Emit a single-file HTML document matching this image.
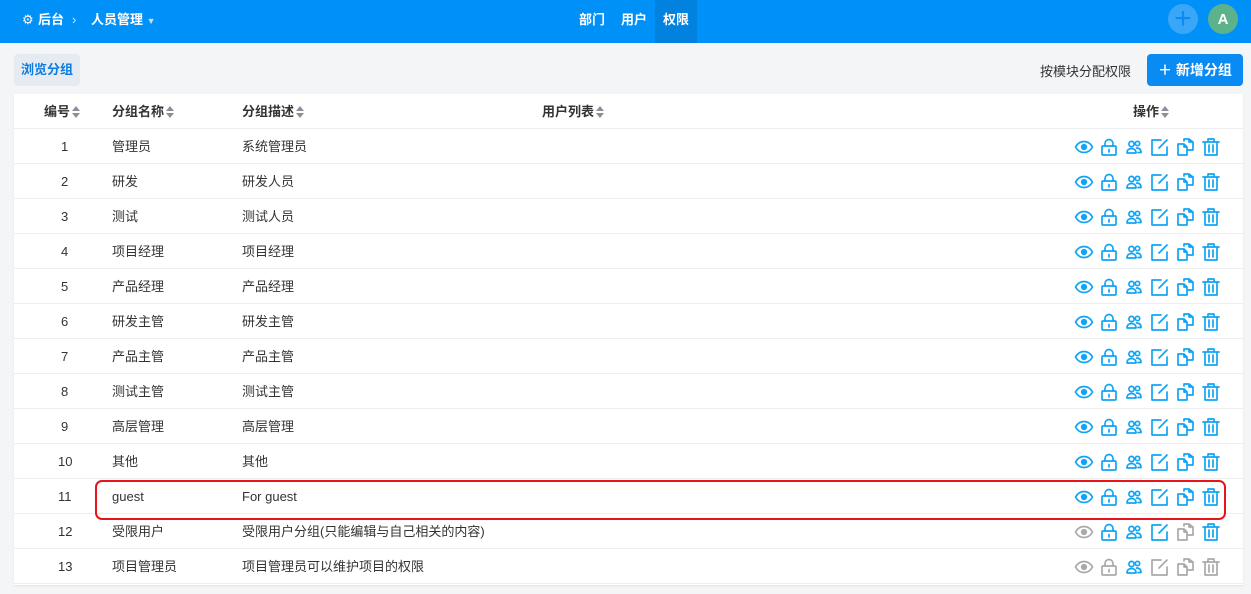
<!DOCTYPE html>
<html><head><meta charset="utf-8"><style>
*{box-sizing:border-box;margin:0;padding:0}
body{width:1251px;height:594px;background:#f4f5f7;font-family:"Liberation Sans","Noto Sans CJK SC",sans-serif;font-size:13px;color:#333;position:relative;overflow:hidden}
.hd{position:absolute;left:0;top:0;width:1251px;height:43px;background:#0091f8;color:#fff}
.hd span{position:absolute;top:11px;font-weight:bold;font-size:13px;line-height:17px}
.tab{position:absolute;top:0;height:43px;line-height:40px;font-weight:bold;color:#fff}
.btn1{position:absolute;left:14px;top:54px;width:66px;height:32px;background:#e6ebf2;border-radius:4px;color:#0a7be0;font-weight:bold;line-height:32px;text-align:center}
.btn2{position:absolute;left:1147px;top:54px;width:96px;height:32px;background:#0a8af3;border-radius:4px;color:#fff;font-weight:bold;line-height:32px;text-align:center;font-size:14px}
.tbl{position:absolute;left:14px;top:94px;width:1229px;height:491px;background:#fff;box-shadow:0 1px 2px rgba(0,0,0,.08)}
.row{position:absolute;left:0;width:1229px;height:35px;border-bottom:1px solid #eceef0;line-height:36px}
.row div{position:absolute;top:0}
.th{font-weight:bold;color:#333}
.s{display:inline-block;vertical-align:middle;margin-left:2px;width:8px;height:12px;position:relative;top:-1px}
.s:before{content:"";position:absolute;left:0;top:0;border:4px solid transparent;border-top:0;border-bottom:5px solid #8a8f99}
.s:after{content:"";position:absolute;left:0;top:7px;border:4px solid transparent;border-bottom:0;border-top:5px solid #8a8f99}
svg.i{position:absolute;top:8px;width:20px;height:20px;fill:none;stroke-width:1.7;stroke-linecap:round;stroke-linejoin:round}
.b{stroke:#10a4f5}.g{stroke:#a9a9a9}
.red{position:absolute;left:95px;top:480px;width:1131px;height:40px;border:2px solid #e8141b;border-radius:7px}
</style></head><body>
<svg width="0" height="0" style="position:absolute">
<symbol id="eye" viewBox="0 0 20 20"><path d="M1.5 10C4 5.5 7 4.5 10 4.5S16 5.5 18.5 10C16 14.5 13 15.5 10 15.5S4 14.5 1.5 10Z"/><circle cx="10" cy="10" r="2.3" fill="currentColor"/></symbol>
<symbol id="lock" viewBox="0 0 20 20"><rect x="3" y="9" width="14" height="9" rx="1"/><path d="M6 9V6.5a4 4 0 0 1 8 0V9M10 12.5v2.5"/></symbol>
<symbol id="usr" viewBox="0 0 20 20"><circle cx="7.5" cy="7" r="2.6"/><path d="M3 16c0-3 2-4.5 4.5-4.5S12 13 12 16Z"/><circle cx="13.5" cy="6.5" r="2.2"/><path d="M12.5 11c3 0 4.5 1.5 4.5 4.5h-3"/></symbol>
<symbol id="edit" viewBox="0 0 20 20"><path d="M17 10v8H2V3h9M17 3l-8 8"/></symbol>
<symbol id="copy" viewBox="0 0 20 20"><path d="M2 7h6l3 3v8H2ZM8 7v3h3M8 4V2h5l4 3v8h-6M13 2v3h4"/></symbol>
<symbol id="trash" viewBox="0 0 20 20"><path d="M2 5h16M7 5V2h6v3M4 5v13h12V5M8 8v7M12 8v7"/></symbol>
</svg>
<div class="hd">
<span style="left:22px;font-weight:normal">⚙</span><span style="left:38px">后台</span>
<span style="left:72px;font-weight:normal;color:#cfe6ff">›</span>
<span style="left:91px">人员管理 <small style="font-size:9px;color:#cde">▼</small></span>
<div class="tab" style="left:579px">部门</div>
<div class="tab" style="left:621px">用户</div>
<div class="tab" style="left:655px;width:42px;background:#0082de;text-align:center">权限</div>
<div style="position:absolute;left:1168px;top:4px;width:30px;height:30px;border-radius:50%;background:#3aa6f7;color:#0a8af3;font-size:30px;line-height:29px;text-align:center">+</div>
<div style="position:absolute;left:1208px;top:4px;width:30px;height:30px;border-radius:50%;background:#5cb38b;color:#fff;font-weight:bold;font-size:15px;line-height:31px;text-align:center">A</div>
</div>
<div class="btn1">浏览分组</div>
<div style="position:absolute;left:1040px;top:61px;color:#333">按模块分配权限</div>
<div class="btn2">＋ 新增分组</div>
<div class="tbl">
<div class="row th" style="top:0"><div style="left:30px">编号<i class="s"></i></div><div style="left:98px">分组名称<i class="s"></i></div><div style="left:228px">分组描述<i class="s"></i></div><div style="left:528px">用户列表<i class="s"></i></div><div style="left:1119px">操作<i class="s"></i></div></div>
<div id="rows"></div>
</div>
<div class="red"></div>
<script>
var d=[["管理员","系统管理员"],["研发","研发人员"],["测试","测试人员"],["项目经理","项目经理"],["产品经理","产品经理"],["研发主管","研发主管"],["产品主管","产品主管"],["测试主管","测试主管"],["高层管理","高层管理"],["其他","其他"],["guest","For guest"],["受限用户","受限用户分组(只能编辑与自己相关的内容)"],["项目管理员","项目管理员可以维护项目的权限"]];
var ic=["eye","lock","usr","edit","copy","trash"],xs=[1060,1085,1110,1136,1162,1187];
var h="";
d.forEach(function(r,i){var c="bbbbbb";if(i==11)c="gbbbgb";if(i==12)c="ggbggg";
h+='<div class="row" style="top:'+(35+i*35)+'px"><div style="left:'+(i>8?44:47)+'px">'+(i+1)+'</div><div style="left:98px">'+r[0]+'</div><div style="left:228px">'+r[1]+'</div>';
ic.forEach(function(n,k){var col=c[k]=="b"?"#10a4f5":"#a9a9a9";h+='<svg class="i '+c[k]+'" style="left:'+xs[k]+'px;color:'+col+'"><use href="#'+n+'"/></svg>';});
h+='</div>';});
document.getElementById("rows").innerHTML=h;
</script>
</body></html>
